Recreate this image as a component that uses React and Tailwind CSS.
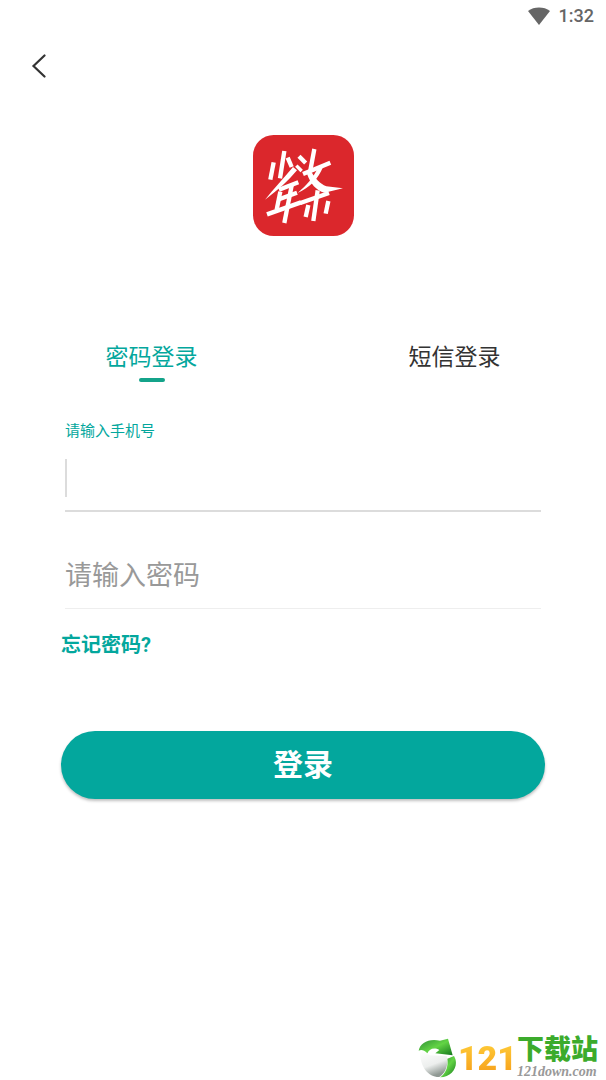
import { useState } from "react";

const tabs = [
  { id: "password", label: "密码登录" },
  { id: "sms", label: "短信登录" },
];

function StatusBar() {
  return (
    <div className="flex h-8 items-center justify-end gap-2 px-3 text-[#666]">
      <svg className="h-[18px] w-6" viewBox="0 0 24 18" fill="currentColor" aria-hidden="true">
        <path d="M12 18 1 4C4 1.500 8 .500 12 .500S20 1.500 23 4Z" />
      </svg>
      <span className="font-[Roboto,sans-serif] text-lg font-medium">1:32</span>
    </div>
  );
}

function AppLogo() {
  return (
    <svg
      className="mx-auto mt-12 size-[101px]"
      viewBox="30 26 303 303"
      role="img"
      aria-label="logo"
    >
      <rect x="30" y="26" width="303" height="303" rx="62" fill="#db272c" />
      <g fill="none" stroke="#fff" strokeWidth="13">
        <path d="M124 74 111 156" />
        <path d="M92 108 82 160" />
        <path d="M134 94 146 122" />
        <path d="M168 90 188 110" />
        <path d="M160 118 176 134" strokeWidth="10" />
        <path d="M214 68 202 132" />
        <path d="M180 143 262 109" />
      </g>
      <g fill="#fff">
        <path d="M150 122 162 132C136 164 104 192 66 220 94 186 122 156 150 122Z" />
        <path d="M192 142 206 138C216 156 230 172 250 180L300 186 244 199C220 192 202 172 192 142Z" />
        <path d="M224 124 240 122C226 158 200 184 164 200 190 176 212 154 224 124Z" />
      </g>
      <g fill="none" stroke="#fff" strokeWidth="13">
        <path d="M108 190 166 168" />
        <path d="M104 220 162 199" />
        <path d="M112 196 101 250" />
        <path d="M146 178 124 290" />
        <path d="M72 264 174 228" />
        <path d="M172 230 258 200" />
        <path d="M224 192 211 284" />
        <path d="M196 236 188 272" />
        <path d="M256 224 248 262" />
      </g>
    </svg>
  );
}

function Watermark() {
  return (
    <div className="mt-auto flex items-center justify-end pr-2">
      <svg className="size-10" viewBox="18 24 120 120" aria-hidden="true">
        <defs>
          <linearGradient id="leaf" x1="0" y1="0" x2="1" y2="1">
            <stop offset="0" stopColor="#2c8a35" />
            <stop offset=".5" stopColor="#63d445" />
            <stop offset="1" stopColor="#12751b" />
          </linearGradient>
          <linearGradient id="ball" x1="0" y1="0" x2=".4" y2="1">
            <stop offset="0" stopColor="#fff" />
            <stop offset=".6" stopColor="#eceeed" />
            <stop offset="1" stopColor="#8f9893" />
          </linearGradient>
        </defs>
        <path d="M24 66C30 62 44 66 52 76L104 78C110 104 102 128 82 141 50 142 24 112 24 66Z" fill="url(#ball)" />
        <path d="M20 62C24 38 52 24 84 32L108 26 122 76 70 70 82 60C66 50 50 58 46 70 36 60 28 58 20 62Z" fill="url(#leaf)" />
        <path d="M126 78C142 104 124 142 84 142 100 132 110 110 106 86Z" fill="url(#leaf)" />
      </svg>
      <span className="bg-linear-to-b from-[#ffd23c] to-[#f59a14] bg-clip-text text-[34px] leading-10 font-black text-transparent">
        121
      </span>
      <div className="flex flex-col">
        <span className="text-[27px] leading-7 font-black text-[#3cab2c]">下载站</span>
        <span className="font-['Liberation_Serif',serif] text-sm leading-4 font-bold text-[#999] italic">
          121down.com
        </span>
      </div>
    </div>
  );
}

export default function App() {
  const [tab, setTab] = useState("password");
  const [phone, setPhone] = useState("");
  const [password, setPassword] = useState("");

  return (
    <main className="flex min-h-screen flex-col bg-white font-[Roboto,'Noto_Sans_CJK_SC',sans-serif]">
      <StatusBar />

      <header className="flex h-[55px] items-center px-6 pt-3">
        <button type="button" aria-label="返回" className="p-1">
          <svg className="h-6 w-6" viewBox="0 0 24 24" fill="none" stroke="#333" strokeWidth="2.200" strokeLinecap="round" aria-hidden="true">
            <path d="M16.500 1.500 5.500 12 16.500 22.500" />
          </svg>
        </button>
      </header>

      <AppLogo />

      <div className="mt-[104px] grid grid-cols-2" role="tablist">
        {tabs.map((item) => (
          <button
            key={item.id}
            type="button"
            role="tab"
            aria-selected={tab === item.id}
            onClick={() => setTab(item.id)}
            className={`flex flex-col items-center gap-0.5 text-[23px] leading-9 ${
              tab === item.id ? "text-[#03a79d]" : "text-[#333]"
            }`}
          >
            {item.label}
            {tab === item.id && <span className="h-1 w-[26px] rounded-full bg-[#14a38a]" />}
          </button>
        ))}
      </div>

      <form className="mt-9 flex flex-col px-[61px]" onSubmit={(e) => e.preventDefault()}>
        <div className="mx-1 border-b-2 border-[#dcdcdc] pb-3">
          <label htmlFor="phone" className="block text-[15px] leading-[26px] text-[#03a79d]">
            请输入手机号
          </label>
          <div className="mt-3.5 flex h-10 items-center">
            <span className="h-[38px] w-0.5 bg-[#dcdcdc]" />
            <input
              id="phone"
              type="tel"
              value={phone}
              onChange={(e) => setPhone(e.target.value)}
              className="w-full px-1 text-[27px] text-[#333] outline-none"
            />
          </div>
        </div>

        <div className="mx-1 mt-10 border-b border-[#eee] pb-2">
          <input
            type="password"
            aria-label="请输入密码"
            placeholder="请输入密码"
            value={password}
            onChange={(e) => setPassword(e.target.value)}
            className="h-12 w-full text-[27px] text-[#333] outline-none placeholder:text-[#999]"
          />
        </div>

        <a href="#forgot" className="mt-5 self-start text-xl leading-8 font-bold text-[#03a79d]">
          忘记密码?
        </a>

        <button
          type="submit"
          className="mt-[70px] h-[68px] rounded-full bg-[#03a79d] text-3xl font-bold text-white shadow-[0_2px_3px_rgba(0,0,0,0.25)]"
        >
          登录
        </button>
      </form>

      <Watermark />
    </main>
  );
}
